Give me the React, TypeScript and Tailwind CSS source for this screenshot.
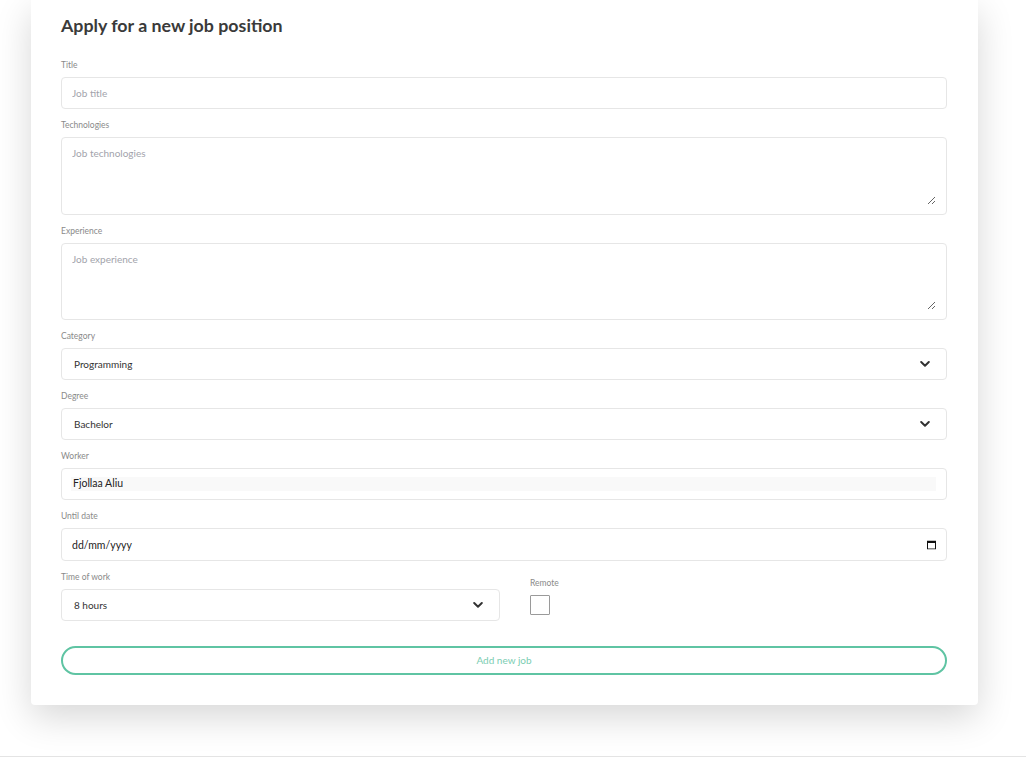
import React from "react";

const font = { fontFamily: "Lato, 'Open Sans', sans-serif" };

function Label({ children }: { children: React.ReactNode }) {
  return <label className="block text-[8.5px] leading-[12px] text-[#8a8a8a] mb-[6px]">{children}</label>;
}

function Chevron() {
  return (
    <svg
      className="pointer-events-none absolute right-[17px] top-1/2 -translate-y-1/2"
      width="10"
      height="7"
      viewBox="0 0 10 7"
      fill="none"
    >
      <path d="M1.2 1.5 5 5.2 8.8 1.5" stroke="#333" strokeWidth="2" strokeLinecap="round" strokeLinejoin="round" />
    </svg>
  );
}

function SelectBox({ value, options }: { value: string; options: string[] }) {
  return (
    <div className="relative">
      <select
        defaultValue={value}
        className="block h-[32px] w-full appearance-none rounded-[4px] border border-[#e6e6e6] bg-white px-[12px] text-[10px] text-[#333] outline-none"
      >
        {options.map((o) => (
          <option key={o}>{o}</option>
        ))}
      </select>
      <Chevron />
    </div>
  );
}

function TextBox({ placeholder, tall }: { placeholder: string; tall?: boolean }) {
  return (
    <div className={`flex w-full rounded-[4px] border border-[#e6e6e6] pt-[8px] pr-[10px] pb-[9px] pl-[10px] ${tall ? "h-[78px]" : "h-[77px]"}`}>
      <textarea
        placeholder={placeholder}
        className="block h-full w-full flex-1 border-0 text-[10px] leading-[14px] text-[#333] outline-none placeholder:text-[#a2a3ab]"
      />
    </div>
  );
}

export default function App() {
  return (
    <div className="min-h-screen bg-white" style={font}>
      <div className="ml-[31px] w-[947px] rounded-b-[4px] bg-white pt-[13px] pr-[31px] pb-[30px] pl-[30px] shadow-[0_12px_36px_rgba(0,0,0,0.16)]">
        <h1 className="text-[17.8px] leading-[24px] font-bold text-[#3a3a3a]">Apply for a new job position</h1>

        <form className="mt-[22px]" onSubmit={(e) => e.preventDefault()}>
          <div className="mb-[10px]">
            <Label>Title</Label>
            <input
              placeholder="Job title"
              className="block h-[32px] w-full rounded-[4px] border border-[#e6e6e6] px-[10px] text-[10px] text-[#333] outline-none placeholder:text-[#a2a3ab]"
            />
          </div>

          <div className="mb-[10px]">
            <Label>Technologies</Label>
            <TextBox placeholder="Job technologies" tall />
          </div>

          <div className="mb-[10px]">
            <Label>Experience</Label>
            <TextBox placeholder="Job experience" />
          </div>

          <div className="mb-[10px]">
            <Label>Category</Label>
            <SelectBox value="Programming" options={["Programming", "Design", "Marketing"]} />
          </div>

          <div className="mb-[10px]">
            <Label>Degree</Label>
            <SelectBox value="Bachelor" options={["Bachelor", "Master", "PhD"]} />
          </div>

          <div className="mb-[10px]">
            <Label>Worker</Label>
            <div className="flex h-[32px] w-full items-center rounded-[4px] border border-[#e6e6e6] pr-[10px] pl-[9px]">
              <div className="flex h-[14px] flex-1 items-center bg-[#f9f9f9] pl-[2px] text-[10.5px] text-[#222]">
                Fjollaa Aliu
              </div>
            </div>
          </div>

          <div className="mb-[10px]">
            <Label>Until date</Label>
            <div className="relative">
              <input
                placeholder="dd/mm/yyyy"
                className="block h-[33px] w-full rounded-[4px] border border-[#e6e6e6] px-[10px] text-[10.5px] text-[#222] outline-none placeholder:text-[#222]"
              />
              <svg
                className="pointer-events-none absolute right-[11px] top-1/2 -translate-y-1/2"
                width="9"
                height="9"
                viewBox="0 0 9 9"
                fill="none"
              >
                <rect x="0.5" y="0.5" width="8" height="8" stroke="#111" />
                <rect x="0.5" y="0.5" width="8" height="2" fill="#111" />
              </svg>
            </div>
          </div>

          <div className="flex items-center">
            <div className="w-[439px]">
              <Label>Time of work</Label>
              <SelectBox value="8 hours" options={["8 hours", "6 hours", "4 hours"]} />
            </div>
            <div className="ml-[30px] flex flex-col">
              <Label>Remote</Label>
              <input
                type="checkbox"
                className="m-0 h-[20px] w-[20px] appearance-none rounded-[1px] border border-[#9a9a9a] bg-white"
              />
            </div>
          </div>

          <button
            type="submit"
            className="mt-[25px] block h-[29px] w-full rounded-full border-2 border-[#5fc4a3] bg-white text-[10px] text-[#7bcdb2]"
          >
            Add new job
          </button>
        </form>
      </div>
      <div className="mt-[51px] border-t border-[#e4e4e4]" />
    </div>
  );
}
